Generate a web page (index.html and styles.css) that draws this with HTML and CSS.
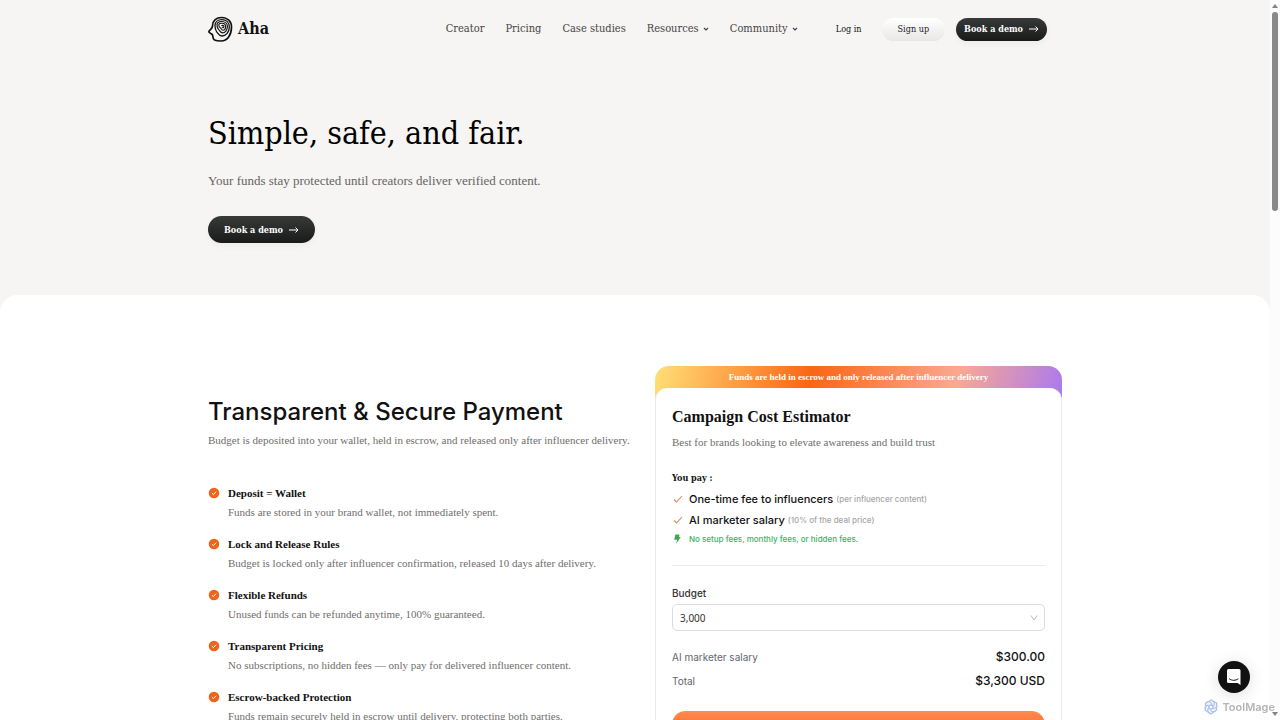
FILE: index.html
```html
<!DOCTYPE html>
<html lang="en">
  <head>
    <meta charset="UTF-8" />
    <meta name="viewport" content="width=device-width, initial-scale=1.0" />
    <title>Aha - Pricing</title>
    <link rel="stylesheet" href="styles.css">
  </head>

  <body>
    <!-- Header -->
    <header class="header container">
      <a class="logo" href="#">
        <svg width="25" height="26" viewBox="0 0 25 26" fill="none" stroke="#111" stroke-linecap="round" stroke-linejoin="round">
          <path stroke-width="1.7" d="M4.600 9.500C4.600 4.500 8.500 1.500 13.500 1.500c6 0 10 4 10 9.500 0 8-4 14-10.500 14-2.500 0-4.800-.2-6.500-1-1.700-.8-1.500-2.500-1.700-4.200-.1-1-.6-1.500-1.500-1.900L1.500 16.600c-.7-.4-.8-1-.3-1.700C3.200 12.500 4.600 12 4.600 9.500z" />
          <path stroke-width="1.300" d="M7 9.500C7 6 10 3.700 13.800 3.700c4.600 0 7.500 3 7.500 7.200 0 5-3.300 9.100-7.300 9.100-3 0-3.700-2.300-5.300-4.200C7.500 14.300 7 12.200 7 9.500z" />
          <path stroke-width="1.200" d="M9 8.800c0-2 2-3.300 4.800-3.300 3.300 0 5.600 2.100 5.600 5.100 0 3.500-2.400 6.200-4.900 6.200-2.200 0-2.300-2-3.800-3.200C9.400 12.500 9 10.800 9 8.800z" />
          <path stroke-width="1.100" d="M10.800 9c0-1.300 1.500-1.900 3.300-1.800 2 .1 3.500 1.500 3.500 3.400 0 2.200-1.400 3.700-2.800 3.700-1.600 0-1.100-1.700-2.300-2.400-1.100-.6-1.700-1.400-1.700-2.900z" />
          <path stroke-width="1.100" d="M13.800 9.500c1.300-.5 2.200.2 2.100 1.300-.1 1.100-1.300 1.300-1.600.3" />
        </svg>
        <span>Aha</span>
      </a>
      <nav class="nav">
        <a href="#">Creator</a>
        <a href="#">Pricing</a>
        <a href="#">Case studies</a>
        <a href="#">Resources
          <svg width="6" height="6" viewBox="0 0 6 6" fill="none" stroke="currentColor" stroke-width="1.200"><path d="M1 2l2 2 2-2" /></svg>
        </a>
        <a href="#">Community
          <svg width="6" height="6" viewBox="0 0 6 6" fill="none" stroke="currentColor" stroke-width="1.200"><path d="M1 2l2 2 2-2" /></svg>
        </a>
      </nav>
      <div class="actions">
        <a class="login" href="#">Log in</a>
        <button class="btn btn-light" type="button">Sign up</button>
        <button class="btn btn-dark btn-small" type="button">Book a demo
          <svg width="10" height="6" viewBox="0 0 10 6" fill="none" stroke="currentColor"><path d="M0 3h9M6.500.5L9 3 6.500 5.500" /></svg>
        </button>
      </div>
    </header>

    <!-- Hero -->
    <section class="hero container">
      <h1>Simple, safe, and fair.</h1>
      <p>Your funds stay protected until creators deliver verified content.</p>
      <button class="btn btn-dark" type="button">Book a demo
        <svg width="10" height="6" viewBox="0 0 10 6" fill="none" stroke="currentColor"><path d="M0 3h9M6.500.5L9 3 6.500 5.500" /></svg>
      </button>
    </section>

    <!-- Payment -->
    <main class="payment">
      <div class="payment-grid container">
        <section class="details">
          <h2>Transparent &amp; Secure Payment</h2>
          <p class="intro">Budget is deposited into your wallet, held in escrow, and released only after influencer delivery.</p>
          <ul class="features">
            <li>
              <svg class="dot" width="12" height="12" viewBox="0 0 12 12"><circle cx="6" cy="6" r="5.300" fill="#ec651c" /><path d="M3.900 6.200l1.500 1.400 2.700-2.900" fill="none" stroke="#fff" /></svg>
              <h3>Deposit = Wallet</h3>
              <p>Funds are stored in your brand wallet, not immediately spent.</p>
            </li>
            <li>
              <svg class="dot" width="12" height="12" viewBox="0 0 12 12"><circle cx="6" cy="6" r="5.300" fill="#ec651c" /><path d="M3.900 6.200l1.500 1.400 2.700-2.900" fill="none" stroke="#fff" /></svg>
              <h3>Lock and Release Rules</h3>
              <p>Budget is locked only after influencer confirmation, released 10 days after delivery.</p>
            </li>
            <li>
              <svg class="dot" width="12" height="12" viewBox="0 0 12 12"><circle cx="6" cy="6" r="5.300" fill="#ec651c" /><path d="M3.900 6.200l1.500 1.400 2.700-2.900" fill="none" stroke="#fff" /></svg>
              <h3>Flexible Refunds</h3>
              <p>Unused funds can be refunded anytime, 100% guaranteed.</p>
            </li>
            <li>
              <svg class="dot" width="12" height="12" viewBox="0 0 12 12"><circle cx="6" cy="6" r="5.300" fill="#ec651c" /><path d="M3.900 6.200l1.500 1.400 2.700-2.900" fill="none" stroke="#fff" /></svg>
              <h3>Transparent Pricing</h3>
              <p>No subscriptions, no hidden fees — only pay for delivered influencer content.</p>
            </li>
            <li>
              <svg class="dot" width="12" height="12" viewBox="0 0 12 12"><circle cx="6" cy="6" r="5.300" fill="#ec651c" /><path d="M3.900 6.200l1.500 1.400 2.700-2.900" fill="none" stroke="#fff" /></svg>
              <h3>Escrow-backed Protection</h3>
              <p>Funds remain securely held in escrow until delivery, protecting both parties.</p>
            </li>
          </ul>
        </section>

        <section class="estimator">
          <p class="banner">Funds are held in escrow and only released after influencer delivery</p>
          <form class="card">
            <h2>Campaign Cost Estimator</h2>
            <p class="card-intro">Best for brands looking to elevate awareness and build trust</p>
            <h3>You pay :</h3>
            <ul class="fees">
              <li>
                <svg width="12" height="10" viewBox="0 0 12 10" fill="none" stroke="#d58a5c" stroke-width="1.100"><path d="M2 5.500l2.500 2.500L10 2" /></svg>
                <span>One-time fee to influencers</span>
                <small>(per influencer content)</small>
              </li>
              <li>
                <svg width="12" height="10" viewBox="0 0 12 10" fill="none" stroke="#d58a5c" stroke-width="1.100"><path d="M2 5.500l2.500 2.500L10 2" /></svg>
                <span>AI marketer salary</span>
                <small>(10% of the deal price)</small>
              </li>
              <li class="no-fees">
                <svg width="12" height="10" viewBox="0 0 12 10" fill="#43a854"><path d="M3.300.5h4.200L7 3h1.800L4.300 9.700l.8-3.900H2.200z" /></svg>
                <span>No setup fees, monthly fees, or hidden fees.</span>
              </li>
            </ul>
            <label class="budget-label" for="budget">Budget</label>
            <div class="select-wrap">
              <select id="budget">
                <option>3,000</option>
                <option>5,000</option>
                <option>10,000</option>
              </select>
              <svg width="8" height="8" viewBox="0 0 8 8" fill="none" stroke="#bbb"><path d="M1 1.500l3 4.500 3-4.500" /></svg>
            </div>
            <dl class="totals">
              <dt>AI marketer salary</dt>
              <dd>$300.00</dd>
              <dt>Total</dt>
              <dd>$3,300 USD</dd>
            </dl>
            <button class="btn btn-orange" type="button">Book a demo</button>
          </form>
        </section>
      </div>
    </main>

    <button class="chat" type="button" aria-label="Open chat">
      <svg width="16" height="16" viewBox="0 0 16 16"><path d="M2.500 0h10.500a1.500 1.500 0 0 1 1.500 1.500V16l-3-2h-9A1.500 1.500 0 0 1 1 12.500v-11A1.500 1.500 0 0 1 2.500 0z" fill="#fff" /><path d="M3.500 10c2.500 1.800 6 1.800 8.500 0" fill="none" stroke="#111" stroke-linecap="round" /></svg>
    </button>

    <div class="watermark">
      <svg width="16" height="16" viewBox="0 0 16 16" fill="none" stroke="#adc3ec" stroke-width="1.300">
        <path d="M8 1l5.500 3v7L8 15l-5.500-3.500V4.500z" />
        <circle cx="8" cy="8" r="2" />
        <path d="M8 1c4 2 4 4 2 7M13.500 4c1 4-1 6-4 5.500M13.500 11c-3 3-6 2-6.500-1M8 15C4 13 4 11 6 8M2.500 11.500C1 8 4 5 6.500 7M2.500 4.500C5 1 9 3 9 6" />
      </svg>
      <span>ToolMage</span>
    </div>

    <div class="scrollbar">
      <svg width="6" height="4" viewBox="0 0 6 4" fill="#858585"><path d="M3 0l3 4H0z" /></svg>
      <div class="thumb"></div>
      <svg width="6" height="4" viewBox="0 0 6 4" fill="#858585"><path d="M0 0h6L3 4z" /></svg>
    </div>
  </body>
</html>
```

FILE: styles.css
```css
* {
  box-sizing: border-box;
}

body {
  margin: 0;
  padding-right: 10px;
  height: 100vh;
  overflow: hidden;
  background-color: #f6f5f3;
  color: #111;
  font-family: "Liberation Serif", serif;
  font-size: 11px;
  line-height: 16px;
}

h1,
h2,
h3,
p,
ul,
dl,
dd {
  margin: 0;
  padding: 0;
}

ul {
  list-style: none;
}

a {
  color: inherit;
  text-decoration: none;
}

.container {
  width: 100%;
  max-width: 854px;
  margin: 0 auto;
}

/* Header */
.header {
  display: flex;
  align-items: center;
  height: 58px;
  padding-right: 15px;
  font-family: "DejaVu Serif Condensed", "DejaVu Serif", serif;
}

.logo {
  display: flex;
  align-items: center;
  gap: 5px;
  font-size: 16px;
  font-weight: bold;
  line-height: 24px;
}

.nav {
  display: flex;
  gap: 21px;
  margin-left: auto;
  color: #444;
}

.nav svg {
  margin-left: 1px;
}

.actions {
  display: flex;
  align-items: center;
  margin-left: 38px;
  font-size: 9px;
}

.login {
  margin-right: 20px;
}

/* Buttons */
.btn {
  display: inline-flex;
  align-items: center;
  justify-content: center;
  gap: 6px;
  height: 27px;
  padding: 0 16px;
  border: none;
  border-radius: 14px;
  color: #fff;
  font-family: "DejaVu Serif Condensed", "DejaVu Serif", serif;
  font-size: 9px;
  cursor: pointer;
}

.btn-dark {
  background: linear-gradient(#373a39, #191b1a);
  box-shadow: 0 3px 6px rgba(0, 0, 0, 0.04);
  font-weight: bold;
}

.btn-light {
  height: 23px;
  margin-right: 11px;
  background: linear-gradient(#fff, #e7e7e6);
  color: #222;
}

.btn-small {
  height: 23px;
  padding: 0 8px;
}

.btn-orange {
  width: 100%;
  background: linear-gradient(#ff8a50, #f4661f);
  font-weight: bold;
}

/* Hero */
.hero {
  padding: 52px 0;
}

.hero h1 {
  color: #000;
  font-family: "DejaVu Serif Condensed", "DejaVu Serif", serif;
  font-size: 32px;
  font-weight: normal;
  line-height: 46px;
}

.hero p {
  margin: 14px 0 25px;
  color: #666461;
  font-size: 13px;
  line-height: 21px;
}

/* Payment */
.payment {
  padding: 71px 0;
  border-radius: 18px 18px 0 0;
  background-color: #fff;
}

.payment-grid {
  display: grid;
  grid-template-columns: minmax(0, 1fr) minmax(0, 1fr);
  gap: 40px;
}

.details {
  padding-top: 30px;
}

.details h2 {
  font-family: Inter, sans-serif;
  font-size: 24px;
  font-weight: 500;
  line-height: 32px;
  white-space: nowrap;
}

.details p {
  color: #706e6b;
  white-space: nowrap;
}

.intro {
  margin-top: 4px;
}

.features {
  display: grid;
  gap: 16px;
  margin-top: 37px;
}

.features li {
  display: grid;
  grid-template-columns: 12px 1fr;
  column-gap: 8px;
  row-gap: 3px;
  align-items: center;
}

.features h3 {
  font-size: 11px;
  line-height: 16px;
}

.features p {
  grid-column: 2;
}

/* Estimator */
.estimator {
  border-radius: 14px;
  background: linear-gradient(105deg, #ffe078 0%, #fb6514 38%, #fba891 73%, #a879f0 100%) top / 100% 40px no-repeat;
}

.banner {
  height: 22px;
  color: #fff;
  font-size: 9px;
  font-weight: bold;
  line-height: 22px;
  text-align: center;
}

.card {
  padding: 16px;
  border: 1px solid #e9e9e9;
  border-top: none;
  border-radius: 12px;
  background-color: #fff;
  font-family: Inter, sans-serif;
}

.card h2 {
  font-family: "Liberation Serif", serif;
  font-size: 16px;
  line-height: 26px;
}

.card-intro {
  margin-top: 4px;
  color: #706e6b;
  font-family: "Liberation Serif", serif;
}

.card h3 {
  margin-top: 20px;
  font-family: "DejaVu Serif Condensed", "DejaVu Serif", serif;
  font-size: 9px;
  line-height: 16px;
}

.fees {
  display: grid;
  gap: 5px;
  margin-top: 5px;
  padding-bottom: 20px;
  border-bottom: 1px solid #e9e9e9;
}

.fees li {
  display: flex;
  align-items: center;
  gap: 3px;
}

.fees svg {
  margin-right: 2px;
}

.fees span {
  font-size: 11px;
  font-weight: 500;
}

.fees small {
  color: #a5a5a5;
  font-size: 8px;
  font-weight: 500;
}

.fees .no-fees span {
  color: #35b566;
  font-size: 8px;
  line-height: 12px;
}

.budget-label {
  display: block;
  margin-top: 19px;
  color: #333;
  font-size: 10px;
  font-weight: 500;
}

.select-wrap {
  position: relative;
  margin-top: 3px;
}

.select-wrap select {
  display: block;
  width: 100%;
  height: 27px;
  padding: 0 7px;
  appearance: none;
  border: 1px solid #dcdcdc;
  border-radius: 5px;
  background-color: #fff;
  color: #333;
  font-family: "Noto Sans", sans-serif;
  font-size: 10px;
}

.select-wrap svg {
  position: absolute;
  top: 10px;
  right: 7px;
  pointer-events: none;
}

.totals {
  display: grid;
  grid-template-columns: 1fr auto;
  gap: 8px;
  align-items: center;
  margin: 18px 0 22px;
}

.totals dt {
  color: #62666d;
  font-size: 10px;
}

.totals dd {
  font-size: 12px;
  font-weight: 500;
  text-align: right;
}

/* Floating items */
.chat {
  position: fixed;
  right: 30px;
  bottom: 27px;
  display: flex;
  align-items: center;
  justify-content: center;
  width: 32px;
  height: 32px;
  padding: 0;
  border: none;
  border-radius: 50%;
  background-color: #111;
  box-shadow: 0 2px 16px rgba(0, 0, 0, 0.14);
  cursor: pointer;
}

.scrollbar {
  position: fixed;
  top: 0;
  right: 0;
  bottom: 0;
  display: flex;
  flex-direction: column;
  align-items: center;
  width: 10px;
  padding: 4px 0;
  background-color: #fcfcfc;
}

.thumb {
  width: 6px;
  height: 28%;
  margin: 4px 0 auto;
  border-radius: 3px;
  background-color: #8a8a8a;
}

.watermark {
  position: fixed;
  right: 5px;
  bottom: 5px;
  z-index: 1;
  display: flex;
  align-items: center;
  gap: 3px;
  color: #b4b4b4;
  font-family: Inter, sans-serif;
  font-size: 11px;
  font-weight: 600;
}
```
